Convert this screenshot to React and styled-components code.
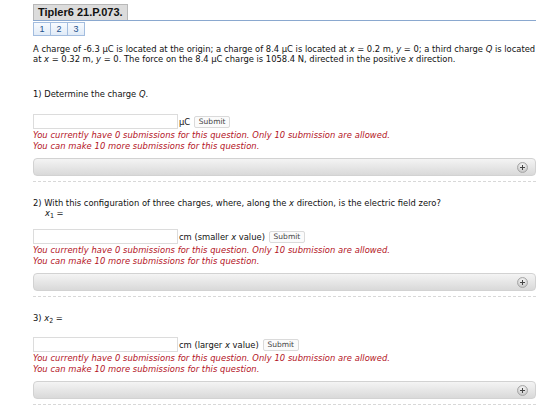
import React from 'react';
import styled, { createGlobalStyle } from 'styled-components';

const Global = createGlobalStyle`
  body {
    margin: 0;
    background: #fff;
    font-family: "DejaVu Sans Condensed", "DejaVu Sans", sans-serif;
    color: #111;
  }
`;

const Page = styled.div`
  width: 503px;
  padding: 4px 0 0 33px;
  font-size: 9.3px;
`;

const Header = styled.div`
  display: flex;
  align-items: flex-end;
  height: 16px;
  border-bottom: 1px solid #8aa8cf;
`;

const Title = styled.div`
  font-family: "Liberation Sans", Arial, sans-serif;
  font-weight: bold;
  font-size: 11px;
  background: #dcdcdc;
  border: 1px solid #b8b8b8;
  border-bottom: none;
  padding: 0 4px;
  height: 15px;
  line-height: 15px;
`;

const Tabs = styled.div`
  display: flex;
  border: 1px solid #a3bddf;
  width: max-content;
  margin-top: 1px;
  margin-bottom: 8px;
`;

const Tab = styled.div`
  width: 16px;
  height: 12px;
  line-height: 12px;
  text-align: center;
  font-family: "Liberation Sans", Arial, sans-serif;
  font-size: 9px;
  color: #1d4f8c;
  background: linear-gradient(#f8fbff, #e1ebf7);
  border-left: ${p => (p.$first ? 'none' : '1px solid #a3bddf')};
`;

const Text = styled.p`
  margin: 0;
  line-height: 10px;
`;

const Question = styled.div`
  border-bottom: 1px dashed #d8d8d8;
  padding: ${p => p.$top}px 0 5px;
`;

const Prompt = styled.div`
  line-height: 10px;
  margin-bottom: ${p => p.$gap}px;

  sub {
    font-size: 7px;
    line-height: 0;
    vertical-align: -2px;
  }
`;

const Sub = styled.div`
  padding-left: 12px;
`;

const AnswerRow = styled.div`
  display: flex;
  align-items: flex-end;
  height: 15px;
`;

const Input = styled.input`
  width: 145px;
  height: 15px;
  box-sizing: border-box;
  border: 1px solid #dcdcdc;
  padding: 0;
  margin: 0;
`;

const Unit = styled.span`
  margin: 0 4px 0 1px;
  line-height: 11px;
  height: 13px;
`;

const SubmitBtn = styled.button`
  font-family: "DejaVu Sans", sans-serif;
  font-size: 7.5px;
  width: 36px;
  height: 12px;
  padding: 0;
  line-height: 10px;
  background: #fbfbfb;
  border: 1px solid #dadada;
  border-radius: 2px;
  color: #444;
  margin-bottom: 1px;
`;

const Warn = styled.div`
  color: #b3121d;
  font-style: italic;
  letter-spacing: 0.06px;
  line-height: 11px;
`;

const Bar = styled.div`
  margin-top: 7px;
  height: 16px;
  border: 1px solid #d2d2d2;
  border-radius: 4px;
  background: linear-gradient(#f4f4f4, #d9d9d9);
  display: flex;
  align-items: center;
  justify-content: flex-end;
  padding-right: 7px;
`;

const PlusIcon = () => (
  <svg width="11" height="11" viewBox="0 0 11 11">
    <defs>
      <radialGradient id="pg" cx="50%" cy="35%" r="60%">
        <stop offset="0" stopColor="#ffffff" />
        <stop offset="1" stopColor="#c4c4c4" />
      </radialGradient>
    </defs>
    <circle cx="5.5" cy="5.5" r="5" fill="url(#pg)" stroke="#a8a8a8" />
    <path d="M5.5 3v5M3 5.5h5" stroke="#444" strokeWidth="1.1" />
  </svg>
);

const Part = ({ prompt, sub, gap, top, unit }) => (
  <Question $top={top}>
    <Prompt $gap={gap}>
      {prompt}
      {sub && <Sub>{sub}</Sub>}
    </Prompt>
    <AnswerRow>
      <Input type="text" />
      <Unit>{unit}</Unit>
      <SubmitBtn>Submit</SubmitBtn>
    </AnswerRow>
    <Warn>
      You currently have 0 submissions for this question. Only 10 submission are allowed.
      <br />
      You can make 10 more submissions for this question.
    </Warn>
    <Bar>
      <PlusIcon />
    </Bar>
  </Question>
);

const App = () => (
  <>
    <Global />
    <Page>
      <Header>
        <Title>Tipler6 21.P.073.</Title>
      </Header>
      <Tabs>
        <Tab $first>1</Tab>
        <Tab>2</Tab>
        <Tab>3</Tab>
      </Tabs>
      <Text>
        A charge of -6.3 μC is located at the origin; a charge of 8.4 μC is located at <i>x</i> = 0.2 m, <i>y</i> = 0; a third charge <i>Q</i> is located
        at <i>x</i> = 0.32 m, <i>y</i> = 0. The force on the 8.4 μC charge is 1058.4 N, directed in the positive <i>x</i> direction.
      </Text>
      <Part prompt={<>1) Determine the charge <i>Q</i>.</>} top={25} gap={15} unit="μC" />
      <Part
        prompt={<>2) With this configuration of three charges, where, along the <i>x</i> direction, is the electric field zero?</>}
        sub={<><i>x</i><sub>1</sub> =</>}
        top={16}
        gap={11}
        unit={<>cm (smaller <i>x</i> value)</>}
      />
      <Part prompt={<>3) <i>x</i><sub>2</sub> =</>} top={16} gap={14} unit={<>cm (larger <i>x</i> value)</>} />
    </Page>
  </>
);

export default App;
